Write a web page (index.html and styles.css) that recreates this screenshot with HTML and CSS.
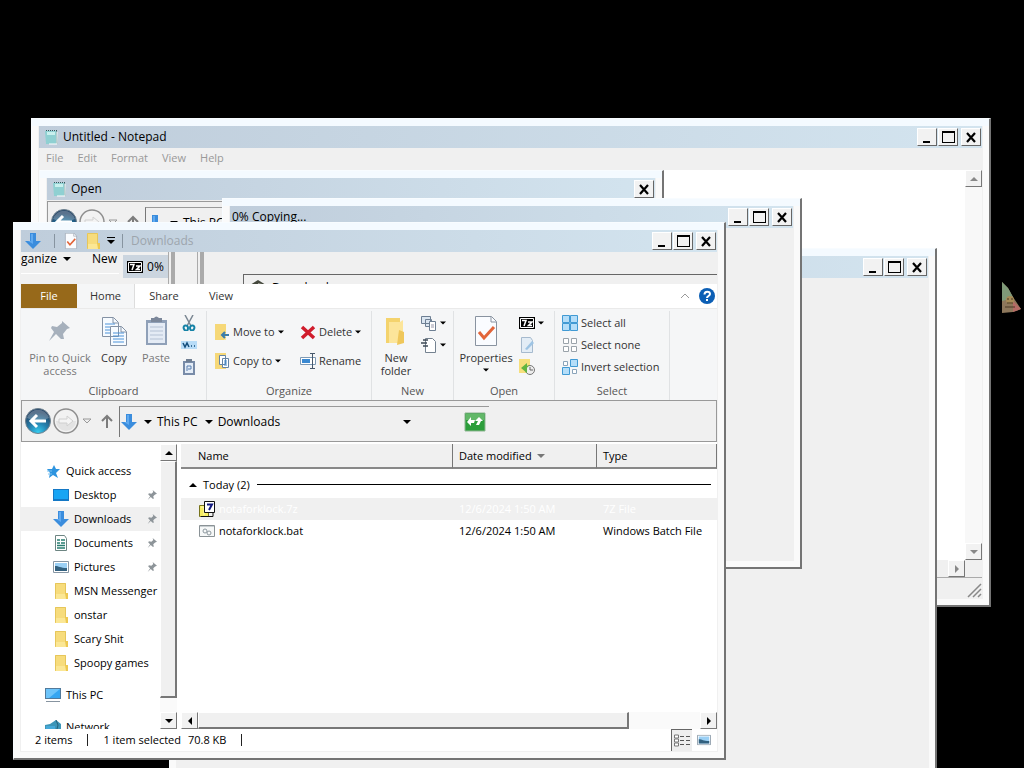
FILE: index.html
```html
<!DOCTYPE html>
<html lang="en">
<head>
<meta charset="utf-8">
<title>Downloads</title>
<link rel="stylesheet" href="styles.css">
</head>
<body>
<svg class="sprite" aria-hidden="true">
  <symbol id="min" viewBox="0 0 16 16"><path d="M4 12h7v2H4z"/></symbol>
  <symbol id="max" viewBox="0 0 16 16"><path d="M2 2h13v12H2zM3 4v9h11V4z" fill-rule="evenodd"/></symbol>
  <symbol id="close" viewBox="0 0 16 16"><path d="M4 4l8 9M12 4l-8 9" stroke="#000" stroke-width="2.2" fill="none"/></symbol>
  <symbol id="down" viewBox="0 0 8 8"><path d="M0 2h8L4 6z"/></symbol>
  <symbol id="up" viewBox="0 0 8 8"><path d="M0 6h8L4 2z"/></symbol>
  <symbol id="left" viewBox="0 0 8 8"><path d="M6 0v8L2 4z"/></symbol>
  <symbol id="right" viewBox="0 0 8 8"><path d="M2 0v8l4-4z"/></symbol>
  <symbol id="notepad" viewBox="0 0 16 16"><path d="M2 2h11l1 13H4z" fill="#6f9a9c"/><path d="M1 2h11v13H2z" fill="#8fd0d2"/><path d="M3 3h8v3H3z" fill="#c9f0ee"/><path d="M2 1.5h11" stroke="#35595b" stroke-dasharray="1 1"/><path d="M13 3v12H5" stroke="#fff" fill="none"/></symbol>
  <symbol id="arrow" viewBox="0 0 16 16"><path d="M5 0h6v8h5l-8 8-8-8h5z" fill="#3b8ddd"/><path d="M6 1h2v10L3 8h3z" fill="#60aaf0"/></symbol>
  <symbol id="folder" viewBox="0 0 16 16"><path d="M2 0h11v16H2z" fill="#f7dc7c"/><path d="M2.500.5h10v15h-10z" fill="none" stroke="#e6c65b"/><path d="M3 11h10v5H3z" fill="#fbe795"/><path d="M12 10h3v6h-2z" fill="#edc850"/></symbol>
  <symbol id="pin" viewBox="0 0 16 16"><path d="M9 0l7 6-3 1-3 3 1 4-2 0-3-3-5 5 4-6-3-3 1-2 4 1 3-3z"/></symbol>
  <symbol id="check" viewBox="0 0 24 30"><path d="M1.500.5h16l5 5v24h-21z" fill="#fafcff" stroke="#8993a0"/><path d="M17 1v5h5" fill="none" stroke="#8993a0"/><path d="M5 16l5 6 10-11" fill="none" stroke="#e2653a" stroke-width="3"/></symbol>
  <symbol id="seven" viewBox="0 0 16 12"><path d="M0 0h16v12H0z"/><path d="M1.500 1.500h13v9h-13z" fill="#000" stroke="#fff"/><path d="M3 3.500h4L5 9M9 5h4L9.500 8.500H13" fill="none" stroke="#fff" stroke-width="1.500"/></symbol>
  <symbol id="back" viewBox="0 0 28 28"><defs><radialGradient id="bg" cx=".5" cy=".95" r=".8"><stop offset="0" stop-color="#36cdf0"/><stop offset=".45" stop-color="#2686b4"/><stop offset="1" stop-color="#244567"/></radialGradient></defs><circle cx="14" cy="14" r="12.500" fill="url(#bg)" stroke="#6f8290"/><path d="M3 11a11.500 11.500 0 0 1 22 0q-11 5-22 0" fill="#fff" opacity=".25"/><path d="M22 14H8M13 8l-6 6 6 6" fill="none" stroke="#fff" stroke-width="3"/></symbol>
  <symbol id="fwd" viewBox="0 0 28 28"><circle cx="14" cy="14" r="12" fill="#f2f2f2" stroke="#8e8e8e" stroke-width="1.500"/><path d="M4 14h20a10 10 0 0 1-20 0" fill="#e3e3e3"/><path d="M7 12h8V9l6 5-6 5v-3H7z" fill="#f4f4f4" stroke="#d0d0d0"/></symbol>
  <symbol id="uparrow" viewBox="0 0 14 14"><path d="M7 14V2M2 7l5-5 5 5" fill="none" stroke="#7c7c7c" stroke-width="2"/></symbol>
  <symbol id="sq" viewBox="0 0 16 16"><path d="M1.500 1.500h5v5h-5zM9.500 1.500h5v5h-5zM1.500 9.500h5v5h-5zM9.500 9.500h5v5h-5z"/></symbol>
  <symbol id="picture" viewBox="0 0 16 12"><path d="M.5.5h15v11H.5z" fill="#fff" stroke="#8797a5"/><path d="M2 2h12v8H2z" fill="#9bd0f5"/><path d="M2 5c4 0 5 2 12 2v3H2z" fill="#33617f"/></symbol>
</svg>

<main class="desktop">

<section class="window notepad" aria-label="Untitled - Notepad">
  <header class="titlebar"><svg class="i16"><use href="#notepad"/></svg><h2>Untitled - Notepad</h2>
    <div class="controls"><button aria-label="Minimize"><svg class="i16"><use href="#min"/></svg></button><button aria-label="Maximize"><svg class="i16"><use href="#max"/></svg></button><button class="x" aria-label="Close"><svg class="i16"><use href="#close"/></svg></button></div></header>
  <nav class="menubar"><button>File</button><button>Edit</button><button>Format</button><button>View</button><button>Help</button></nav>
  <div class="editor"><div class="paper"></div><div class="vtrack"><button class="sb dim" aria-label="Scroll up"><svg class="i8"><use href="#up"/></svg></button><button class="sb dim" aria-label="Scroll down"><svg class="i8"><use href="#down"/></svg></button></div></div>
  <div class="htrack"><button class="sb dim" aria-label="Scroll right"><svg class="i8"><use href="#right"/></svg></button></div>
  <footer class="grip"><svg class="i16" viewBox="0 0 16 16"><path d="M2 15L15 2M7 15l8-8M12 15l3-3" stroke="#888" stroke-width="1.500"/></svg></footer>
</section>

<section class="window open" aria-label="Open">
  <header class="titlebar"><svg class="i16"><use href="#notepad"/></svg><h2>Open</h2><div class="controls"><button class="x" aria-label="Close"><svg class="i16"><use href="#close"/></svg></button></div></header>
  <div class="address"><button aria-label="Back"><svg class="i28"><use href="#back"/></svg></button><button aria-label="Forward"><svg class="i28"><use href="#fwd"/></svg></button><svg class="i8 hollow"><use href="#down"/></svg><button class="upbtn" aria-label="Up"><svg class="i14"><use href="#uparrow"/></svg></button>
  <div class="crumbs"><svg class="i16"><use href="#arrow"/></svg><svg class="i8"><use href="#down"/></svg><button>This PC</button></div></div>
</section>

<section class="window rear" aria-label="Background window">
  <header class="titlebar"><h2></h2><div class="controls"><button aria-label="Minimize"><svg class="i16"><use href="#min"/></svg></button><button aria-label="Maximize"><svg class="i16"><use href="#max"/></svg></button><button class="x" aria-label="Close"><svg class="i16"><use href="#close"/></svg></button></div></header>
</section>

<section class="window copying" aria-label="Copying">
  <header class="titlebar"><h2>0% Copying...</h2><div class="controls"><button aria-label="Minimize"><svg class="i16"><use href="#min"/></svg></button><button aria-label="Maximize"><svg class="i16"><use href="#max"/></svg></button><button class="x" aria-label="Close"><svg class="i16"><use href="#close"/></svg></button></div></header>
</section>

<section class="window explorer" aria-label="Downloads">
  <header class="titlebar">
    <svg class="i16"><use href="#arrow"/></svg><i class="tick"></i>
    <button class="quick" aria-label="Properties"><svg class="i16"><use href="#check"/></svg></button><button class="quick" aria-label="New folder"><svg class="i16"><use href="#folder"/></svg></button><button class="more" aria-label="Customize"><svg class="i8" viewBox="0 0 8 8"><path d="M0 0h8v1H0zM0 3h8L4 7z"/></svg></button><i class="tick"></i>
    <h1>Downloads</h1>
    <div class="controls"><button aria-label="Minimize"><svg class="i16"><use href="#min"/></svg></button><button aria-label="Maximize"><svg class="i16"><use href="#max"/></svg></button><button class="x" aria-label="Close"><svg class="i16"><use href="#close"/></svg></button></div>
  </header>
  <div class="remnant">
    <div class="organize"><span>ganize</span><svg class="i8"><use href="#down"/></svg><span class="new">New</span></div>
    <div class="progress"><svg class="seven"><use href="#seven"/></svg><span>0%</span></div>
    <i class="bar"></i><i class="bar second"></i>
    <div class="slice"><svg class="i16" viewBox="0 0 16 16"><path d="M0 5l8-5 8 5-8 4z" fill="#44483c"/><path d="M8 3l8 2-8 4z" fill="#a7a59b"/></svg><span>Downloads</span></div>
  </div>
  <nav class="tabs"><button class="file">File</button><button class="active">Home</button><button class="share">Share</button><button>View</button>
    <button class="collapse" aria-label="Collapse ribbon"><svg class="i8" viewBox="0 0 8 8"><path d="M0 6l4-4 4 4" fill="none" stroke="#999"/></svg></button>
    <button class="help" aria-label="Help"><svg class="i16" viewBox="0 0 16 16"><circle cx="8" cy="8" r="8" fill="#0c5fb5"/><path d="M5.500 6.500c0-4 5.500-3.500 5.500-.5 0 2-3 2-3 4M8 11v2" fill="none" stroke="#fff" stroke-width="2"/></svg></button></nav>

  <div class="ribbon">
    <section class="group g-clip"><div class="tools">
      <button class="big gray pinq"><svg class="i30" viewBox="0 0 30 30"><path d="M17 5l8 7-3 1-4 5 1 5-3 0-5-5-7 7 5-9-3-4 1-2 5 1 5-4z" fill="#a6b0bc"/></svg><span>Pin to Quick<br>access</span></button>
      <button class="big"><svg class="i30" viewBox="0 0 30 30"><g fill="#f7fbff" stroke="#8492a5"><path d="M3.500 1.500h11l5 5v14h-16zM11.500 10.500h11l5 5v14h-16z"/><path d="M14 2v5h5M22 11v5h5" fill="none"/></g><path d="M6 8h10M6 11h5M6 14h5M6 17h5M14 17h11M14 20h11M14 23h11M14 26h11" stroke="#4d93d9"/></svg><span>Copy</span></button>
      <button class="big gray"><svg class="i30" viewBox="0 0 30 30"><path d="M5 4h21v25H5z" fill="#8fa0b8"/><path d="M7 7h17v20H7z" fill="#e4ebf5"/><path d="M10 2h3q2-3 5 0h3v4H10z" fill="#7b879a"/><path d="M9 11h13M9 15h13M9 19h13M9 23h13" stroke="#b4c1d4"/></svg><span>Paste</span></button>
      <div class="stack"><button aria-label="Cut"><svg class="i16" viewBox="0 0 16 16"><path d="M4 0l6 11M12 0L6 11" stroke="#7a8692" stroke-width="1.500"/><path d="M3 14c-2-4 4-5 4-1s-3 3-4 1zm6-1c0-4 6-3 4 1-1 2-4 2-4-1z" fill="none" stroke="#1582a6" stroke-width="2"/></svg></button>
      <button aria-label="Copy path"><svg class="i16" viewBox="0 0 16 16"><path d="M0 4h16v8H0z" fill="#b8dcf7"/><path d="M2 6l2 4 2-4 2 4M10 9h1M13 9h1" fill="none" stroke="#144e7c" stroke-width="1.500"/></svg></button>
      <button aria-label="Paste shortcut"><svg class="i16" viewBox="0 0 16 16"><path d="M2 2h12v14H2z" fill="#788ba8"/><path d="M4 4h8v10H4z" fill="#e5edf7"/><path d="M5 0h6v3H5z" fill="#6f7e92"/><path d="M6 12V7h4v3H7" fill="none" stroke="#597fb0"/></svg></button></div>
    </div><h3>Clipboard</h3></section>
    <section class="group g-org"><div class="tools">
      <div class="pairs"><button><svg class="i16" viewBox="0 0 16 16"><path d="M1 0h11v16H1z" fill="#f6d878"/><path d="M10 10h2v6h-2z" fill="#fbe795"/><path d="M15 11H9M11 8l-3 3 3 3" fill="none" stroke="#3b7dab" stroke-width="2"/></svg><span>Move to</span><svg class="i6"><use href="#down"/></svg></button><button><svg class="i16" viewBox="0 0 16 16"><path d="M1 0h11v16H1z" fill="#f6d878"/><path d="M5.500 2.500h6v9h-6zM8.500 5.500h6v9h-6z" fill="#fff" stroke="#6484a5"/><path d="M10 8h3M10 10h3M10 12h3" stroke="#3b86cc"/></svg><span>Copy to</span><svg class="i6"><use href="#down"/></svg></button></div>
      <div class="pairs sep"><button><svg class="i16" viewBox="0 0 16 16"><path d="M2 3l12 11M14 3L2 14" stroke="#d01c2c" stroke-width="3.500"/></svg><span>Delete</span><svg class="i6"><use href="#down"/></svg></button><button><svg class="i16" viewBox="0 0 16 16"><path d="M.5 4.500h15v7H.5z" fill="#fff" stroke="#7e9ab5"/><path d="M2 6h8v4H2z" fill="#3a89d2"/><path d="M12.500 1v14M10 .5h5M10 15.500h5" stroke="#47586b"/></svg><span>Rename</span></button></div>
    </div><h3>Organize</h3></section>
    <section class="group g-new"><div class="tools">
      <button class="big folderbtn"><svg class="i30" viewBox="0 0 30 30"><path d="M5 2h14v25H5z" fill="#f4d36d"/><path d="M8 6h11l3-2v20l-3 3H8z" fill="#fce59a"/><path d="M18 14l5 2v11l-7 2z" fill="#efc75b"/></svg><span>New<br>folder</span></button>
      <div class="stack two"><button aria-label="New item"><svg class="i16" viewBox="0 0 16 16"><path d="M.5 1.500h9v7h-9zM4.500 4.500h6v7h-6z" fill="#dbe6f1" stroke="#6d7f93"/><path d="M8.500 6.500h6v9h-6z" fill="#fff" stroke="#6d7f93"/><path d="M10 10h3M10 12h3" stroke="#99a"/></svg><svg class="i6"><use href="#down"/></svg></button><button aria-label="Easy access"><svg class="i16" viewBox="0 0 16 16"><path d="M4.500 1.500h7l3 3v11h-10z" fill="#fff" stroke="#748290"/><path d="M2 3h5M0 6h6M2 9h5" stroke="#3f4b57" stroke-width="1.500"/></svg><svg class="i6"><use href="#down"/></svg></button></div>
    </div><h3>New</h3></section>
    <section class="group g-open"><div class="tools">
      <button class="big prop"><svg class="i30"><use href="#check"/></svg><span>Properties</span><svg class="i6"><use href="#down"/></svg></button>
      <div class="stack"><button aria-label="Open with"><svg class="seven"><use href="#seven"/></svg><svg class="i6"><use href="#down"/></svg></button><button aria-label="Edit"><svg class="i16" viewBox="0 0 16 16"><path d="M2.500.5h9l2 3v12h-11z" fill="#e3edf6" stroke="#a6bace"/><path d="M6 12l7-8 2 2-7 7z" fill="#9ec4e4"/></svg></button><button aria-label="History"><svg class="i16" viewBox="0 0 16 16"><path d="M0 0h11v14H0z" fill="#f6df7c"/><circle cx="11" cy="11" r="4.500" fill="#eee" stroke="#777"/><path d="M11 8v3h3" fill="none" stroke="#666"/><path d="M2 9l6-5v3l3-1q-3 2-3 3v5z" fill="#62b540"/></svg></button></div>
    </div><h3>Open</h3></section>
    <section class="group g-select"><div class="tools"><div class="stack">
      <button><svg class="i16" viewBox="0 0 16 16"><path d="M.5.5h7v7h-7zM8.500.5h7v7h-7zM.5 8.500h7v7h-7zM8.500 8.500h7v7h-7z" fill="#b5def9" stroke="#419ad4"/></svg><span>Select all</span></button><button><svg class="i16" fill="#fff" stroke="#9aa3aa"><use href="#sq"/></svg><span>Select none</span></button><button><svg class="i16" viewBox="0 0 16 16"><path d="M1.500 2.500h4v4h-4zM10.500 10.500h4v4h-4z" fill="#fff" stroke="#8aa4ba"/><path d="M8.500.5h7v7h-7zM.5 8.500h7v7h-7z" fill="#b5def9" stroke="#419ad4"/></svg><span>Invert selection</span></button>
    </div></div><h3>Select</h3></section>
  </div>

  <div class="address"><button aria-label="Back"><svg class="i28"><use href="#back"/></svg></button><button aria-label="Forward"><svg class="i28"><use href="#fwd"/></svg></button><svg class="i8 hollow"><use href="#down"/></svg><button class="upbtn" aria-label="Up"><svg class="i14"><use href="#uparrow"/></svg></button>
    <div class="crumbs"><svg class="i16"><use href="#arrow"/></svg><svg class="i8"><use href="#down"/></svg><button>This PC</button><svg class="i8"><use href="#down"/></svg><button>Downloads</button><button class="history" aria-label="Previous locations"><svg class="i8"><use href="#down"/></svg></button><button class="refresh" aria-label="Refresh"><svg viewBox="0 0 22 20"><path d="M1 1h20v18H1z" fill="#2c9e3b" stroke="#8eb591"/><path d="M2 2h18v6H2z" fill="#62b868"/><path d="M3 10l4-5v3h4l-1 3H7v3zM19 9l-4-4-4 4h3l-2 4h3l2-4z" fill="#fff"/></svg></button></div></div>

  <div class="content">
    <nav class="places">
      <ul>
        <li class="root"><a href="#quick"><svg class="i16" viewBox="0 0 16 16"><path d="M9 2l2 4h4l-4 4 2 5-5-3-4 3 1-5-3-4h5z" fill="#2d94df"/><path d="M2 8h5M3 11h4" stroke="#7ac1f1"/></svg><span>Quick access</span></a></li>
        <li><a href="#desktop"><svg class="i16" viewBox="0 0 16 16"><path d="M0 2h16v12H0z" fill="#1478c5"/><path d="M1 3h14v9H1z" fill="#18a5f4"/></svg><span>Desktop</span><svg class="i10 pin"><use href="#pin"/></svg></a></li>
        <li class="current"><a href="#downloads"><svg class="i16"><use href="#arrow"/></svg><span>Downloads</span><svg class="i10 pin"><use href="#pin"/></svg></a></li>
        <li><a href="#documents"><svg class="i16" viewBox="0 0 16 16"><path d="M2.500.5h9l2 3v12h-11z" fill="#fff" stroke="#6d8582"/><path d="M4 5h3M8 5h4M4 8h3M8 8h4M4 10.500h8M4 13h8" stroke="#287d70" stroke-width="1.500"/></svg><span>Documents</span><svg class="i10 pin"><use href="#pin"/></svg></a></li>
        <li><a href="#pictures"><svg class="i16"><use href="#picture"/></svg><span>Pictures</span><svg class="i10 pin"><use href="#pin"/></svg></a></li>
        <li><a href="#msn"><svg class="i16"><use href="#folder"/></svg><span>MSN Messenger</span></a></li>
        <li><a href="#onstar"><svg class="i16"><use href="#folder"/></svg><span>onstar</span></a></li>
        <li><a href="#scary"><svg class="i16"><use href="#folder"/></svg><span>Scary Shit</span></a></li>
        <li><a href="#spoopy"><svg class="i16"><use href="#folder"/></svg><span>Spoopy games</span></a></li>
        <li class="root gap"><a href="#pc"><svg class="i16" viewBox="0 0 16 16"><path d="M0 1h16v11H0z" fill="#527a9b"/><path d="M1 2h14v9H1z" fill="#35a6f2"/><path d="M1 2h14L4 11H1z" fill="#6dc4fa"/><path d="M1 14.500h14" stroke="#8794a0"/></svg><span>This PC</span></a></li>
        <li class="root gap"><a href="#network"><svg class="i16" viewBox="0 0 16 16"><path d="M0 6l5-1 6-4 5 4v9H0z" fill="#3d96b8"/><path d="M1 7h9v6H1z" fill="#46a9d9"/><path d="M11 1l2 5-2 8" stroke="#255f78" fill="none"/></svg><span>Network</span></a></li>
      </ul>
      <div class="vscroll"><button class="sb" aria-label="Scroll up"><svg class="i8"><use href="#up"/></svg></button><div class="thumb"></div><button class="sb" aria-label="Scroll down"><svg class="i8"><use href="#down"/></svg></button></div>
    </nav>
    <div class="files">
      <table>
        <colgroup><col class="c-name"><col class="c-date"><col></colgroup>
        <thead><tr><th>Name</th><th>Date modified <svg class="i8"><use href="#down"/></svg></th><th>Type</th></tr></thead>
        <tbody>
          <tr class="day"><td colspan="3"><div><svg class="i8"><use href="#up"/></svg><span>Today (2)</span><hr></div></td></tr>
          <tr class="selected"><td><div><svg class="i16" viewBox="0 0 16 16"><path d="M.5 4.500h9v11h-9z" fill="#f7ee62" stroke="#77731c"/><path d="M2 6h3v8" stroke="#fffbc0" fill="none"/><path d="M5.500.5h10v11h-10z" fill="#fff" stroke="#111"/><path d="M8 3.500h5L10 9" fill="none" stroke="#131a80" stroke-width="2"/><path d="M2 15.500h12v-4" stroke="#111" fill="none"/></svg><span>notaforklock.7z</span></div></td><td>12/6/2024 1:50 AM</td><td>7Z File</td></tr>
          <tr><td><div><svg class="i16" viewBox="0 0 16 16"><path d="M.5 2.500h15v11H.5z" fill="#f6f8f8" stroke="#8a9296"/><path d="M1 3.500h14" stroke="#c8ced1"/><circle cx="6" cy="8" r="2" fill="none" stroke="#8c979e"/><circle cx="10" cy="10" r="2" fill="none" stroke="#8c979e"/></svg><span>notaforklock.bat</span></div></td><td>12/6/2024 1:50 AM</td><td>Windows Batch File</td></tr>
        </tbody>
      </table>
      <div class="hscroll"><button class="sb" aria-label="Scroll left"><svg class="i8"><use href="#left"/></svg></button><div class="thumb"></div><button class="sb" aria-label="Scroll right"><svg class="i8"><use href="#right"/></svg></button></div>
    </div>
  </div>
  <footer class="status"><span>2 items</span><i></i><span>1 item selected</span><span class="size">70.8 KB</span><i></i>
    <div class="views"><button class="on" aria-label="Details"><svg viewBox="0 0 18 14"><path d="M1.500 1.500h4v3h-4zM1.500 5.500h4v3h-4zM1.500 9.500h4v3h-4z" fill="#fff" stroke="#777"/><path d="M7 3h4M13 3h4M7 7h4M13 7h4M7 11h4M13 11h4" stroke="#555"/></svg></button><button aria-label="Large icons"><svg viewBox="0 0 16 12"><use href="#picture"/></svg></button></div></footer>
</section>

<svg class="cursor" viewBox="0 0 22 32" aria-hidden="true"><path d="M1 1l6 6 5 9 8 12-8 3-11 1z" fill="#8d775b"/><path d="M1 1l6 6 5 9-3 2-8 2z" fill="#7f9a78"/><path d="M12 20l8 8-8 3z" fill="#b56b65"/><circle cx="9" cy="19" r="4" fill="#a68b56"/><path d="M6 18h2M10 18h2M6 22h6M4 26h10" stroke="#4a3b27"/></svg>
</main>
</body>
</html>
```
FILE: styles.css
```css
* { box-sizing: border-box; }
body { margin: 0; background: #000; color: #000; font: 12px/16px "Open Sans", "Noto Sans", sans-serif; }
button { margin: 0; padding: 0; border: 0; background: none; color: inherit; font: inherit; }
h1, h2, h3 { margin: 0; font-size: 12px; font-weight: 400; }
svg { flex: none; display: block; }
a { color: inherit; text-decoration: none; }
.sprite { position: absolute; width: 0; height: 0; }
.i6 { width: 6px; height: 6px; }
.i8 { width: 8px; height: 8px; }
.i10 { width: 10px; height: 10px; }
.i14 { width: 14px; height: 14px; }
.i16 { width: 16px; height: 16px; }
.i28 { width: 28px; height: 28px; }
.i30 { width: 30px; height: 30px; }
.seven { width: 16px; height: 12px; }
.desktop { position: relative; height: 100vh; overflow: hidden; background: #000; }

.window { position: absolute; display: flex; flex-direction: column; padding: 7px; background: #f0f0f0; border: 1px solid #f8fcff; border-right: 2px solid #747474; border-bottom: 2px solid #747474; box-shadow: inset 0 7px #f4faff, inset 6px 0 #fafafa, inset -6px 0 #fafafa, inset 0 -6px #fafafa; }
.notepad { left: 31px; top: 118px; width: 960px; height: 489px; }
.open { left: 39px; top: 170px; width: 625px; height: 240px; }
.rear { left: 169px; top: 248px; width: 768px; height: 560px; }
.copying { left: 222px; top: 198px; width: 580px; height: 371px; }
.explorer { left: 13px; top: 222px; width: 713px; height: 538px; }

.titlebar { flex: none; display: flex; align-items: center; height: 22px; padding-left: 5px; gap: 3px; background: linear-gradient(90deg, #bfcddb, #d3e4ef); }
.titlebar h1, .titlebar h2 { flex: 1; }
.titlebar h1 { color: #9da5ad; padding-left: 5px; }
.copying .titlebar { padding-left: 2px; }
.explorer .titlebar { padding-left: 4px; }
.controls { display: flex; }
.controls button { width: 20px; height: 18px; padding: 0 1px; margin-right: 1px; background: #f2f2f2; border: 1px solid #fff; border-right-color: #666; border-bottom-color: #666; }
.controls .x { margin-left: 2px; }
.menubar { display: flex; gap: 14px; height: 22px; padding: 0 0 2px 7px; color: #999; flex: none; font-size: 11px; }
.editor { flex: 1; display: flex; background: #fff; }
.paper { flex: 1; }
.vtrack { display: flex; flex-direction: column; justify-content: space-between; background: #f8f8f8; }
.htrack { display: flex; justify-content: flex-end; height: 18px; padding-right: 17px; border-bottom: 1px solid #aaa; }
.sb { display: grid; place-items: center; flex: none; width: 17px; height: 17px; background: #f2f2f2; border: 1px solid #fff; border-right-color: #777; border-bottom-color: #777; }
.dim { fill: #888; }
.grip { display: flex; justify-content: flex-end; align-items: end; height: 20px; }

.address { flex: none; display: flex; align-items: center; height: 42px; border: 1px solid #999; background: #f0f0f0; padding-left: 2px; }
.open .address { margin-top: 1px; }
.hollow { fill: #eee; stroke: #999; margin: 0 9px 0 3px; }
.crumbs { display: flex; align-items: center; align-self: stretch; flex: 0 0 370px; margin: 5px 0 4px 5px; padding: 0 3px 0 1px; border-left: 1px solid #777; border-top: 1px solid #999; gap: 5px; }
.crumbs > .i8 { margin-left: 2px; }
.open .crumbs { flex: 0 0 200px; }
.history { margin-left: auto; margin-right: 48px; }
.refresh svg { width: 22px; height: 20px; }

.tick { width: 1px; height: 14px; background: #8794a0; margin: 0 5px 0 10px; }
.more + .tick { margin: 0 0 0 4px; }
.quick + .quick { margin-left: 3px; }
.more { margin-left: 3px; }

.remnant { flex: none; display: flex; height: 32px; overflow: hidden; background: #f0f0f0; }
.organize { display: flex; gap: 6px; width: 98px; height: 22px; align-items: start; overflow: hidden; border-bottom: 1px solid #fff; flex: none; line-height: 13px; }
.organize .i8 { margin-top: 3px; }
.organize .new { margin-left: 15px; }
.progress { display: flex; align-items: center; justify-content: center; gap: 4px; width: 45px; height: 23px; margin: 3px 0 0 4px; background: #cbd5df; flex: none; }
.bar { flex: none; width: 7px; border-right: 4px solid #aaa; border-left: 1px solid #aaa; }
.bar.second { margin-left: 22px; }
.slice { display: flex; flex: 1; gap: 6px; height: 32px; margin: 22px 0 0 39px; padding: 5px 6px; border-top: 1px solid #666; border-left: 1px solid #666; }
.tabs { flex: none; display: flex; height: 24px; background: #fff; }
.tabs button { width: 56px; color: #333; font-size: 11px; }
.tabs .file { background: #97691a; color: #fff; }
.tabs .active { width: 58px; background: #f5f6f7; border-right: 1px solid #ddd; }
.tabs .share { width: 58px; }
.tabs .collapse { width: 18px; margin-left: auto; }
.tabs .help { width: 18px; }

.ribbon { flex: none; display: flex; height: 92px; background: #f5f6f7; border-top: 1px solid #eaeaea; color: #333; font-size: 11px; }
.group { display: flex; flex-direction: column; padding-bottom: 1px; border-right: 1px solid #e0e2e4; margin-top: 2px; }
.group h3 { text-align: center; color: #555; font-size: 11px; }
.tools { flex: 1; display: flex; align-items: flex-start; }
.g-clip { width: 186px; }
.g-org { width: 165px; }
.g-new { width: 82px; }
.g-open { width: 101px; }
.g-select { width: 115px; }
.big { display: flex; flex-direction: column; align-items: center; flex: none; width: 42px; padding-top: 5px; line-height: 13px; white-space: nowrap; }
.big span { margin-top: 5px; }
.big.gray { color: #777; }
.pinq { width: 72px; padding-left: 6px; }
.folderbtn { width: 48px; }
.prop { width: 64px; }
.big .i6 { margin-top: 3px; }
.stack { display: flex; flex-direction: column; padding: 1px 0 0 4px; }
.stack button { display: flex; align-items: center; gap: 3px; height: 22px; white-space: nowrap; }
.g-new .stack { padding-left: 1px; }
.g-open .stack { padding-left: 1px; }
.g-select .stack { padding-left: 7px; }
.pairs { display: flex; flex-direction: column; padding: 6px 0 0 7px; flex: none; width: 86px; }
.pairs.sep { width: 76px; }
.pairs button { display: flex; align-items: center; gap: 3px; height: 29px; white-space: nowrap; }

.content { flex: 1; min-height: 0; display: flex; padding-top: 2px; background: #fff; }
.places { display: flex; width: 156px; flex: none; margin-right: 4px; }
.places ul { flex: 1; min-width: 0; margin: 0; padding: 15px 0 0; list-style: none; overflow: hidden; font-size: 11px; }
.places a { display: flex; align-items: center; gap: 5px; height: 24px; padding-left: 32px; white-space: nowrap; }
.places .root a { padding-left: 24px; }
.places .gap { margin-top: 8px; }
.places .current { background: #f0f0f0; }
.pin { fill: #8d9499; margin-left: auto; margin-right: 3px; }
.vscroll { display: flex; flex-direction: column; width: 17px; background: #fafafa; }
.thumb { background: #f0f0f0; border: 1px solid #fff; border-right: 2px solid #777; border-bottom: 2px solid #777; }
.vscroll .thumb { flex: 1; margin-bottom: 14px; }
.files { flex: 1; min-width: 0; display: flex; flex-direction: column; justify-content: space-between; }
table { width: 100%; table-layout: fixed; border-collapse: separate; border-spacing: 0; font-size: 11px; }
.c-name { width: 272px; }
.c-date { width: 144px; }
th { height: 25px; padding: 0 6px; background: #f0f0f0; border-right: 1px solid #777; border-bottom: 2px solid #888; font-weight: 400; text-align: left; white-space: nowrap; }
th:first-child { padding-left: 17px; }
th svg { display: inline-block; margin-left: 2px; fill: #777; }
td { height: 22px; padding: 0 6px; white-space: nowrap; }
td:first-child { padding-left: 18px; }
td > div { display: flex; align-items: center; gap: 4px; }
.day td { height: 29px; padding: 2px 6px 0 8px; }
.day td > div { gap: 6px; }
.day hr { flex: 1; margin: 0 0 0 1px; border: 0; border-top: 1px solid #000; }
.selected { color: #fff; }
.selected td { background: #f0f0f0; }
.hscroll { display: flex; background: #fafafa; }
.hscroll .thumb { width: 431px; height: 17px; margin-right: auto; }
.status { flex: none; display: flex; align-items: center; height: 22px; gap: 15px; padding-left: 14px; background: #fff; font-size: 11px; }
.status i { width: 1px; height: 12px; background: #222; }
.size { margin-left: -8px; }
.views { display: flex; align-items: center; margin-left: auto; margin-right: 6px; gap: 5px; }
.views button { width: 14px; height: 12px; }
.views .on { width: 21px; height: 22px; padding: 3px 1px; border-left: 1px solid #666; border-top: 1px solid #666; background: #eee; }
.views svg { width: 100%; height: 100%; }
.cursor { position: absolute; left: 1000px; top: 281px; width: 24px; height: 32px; }
```
